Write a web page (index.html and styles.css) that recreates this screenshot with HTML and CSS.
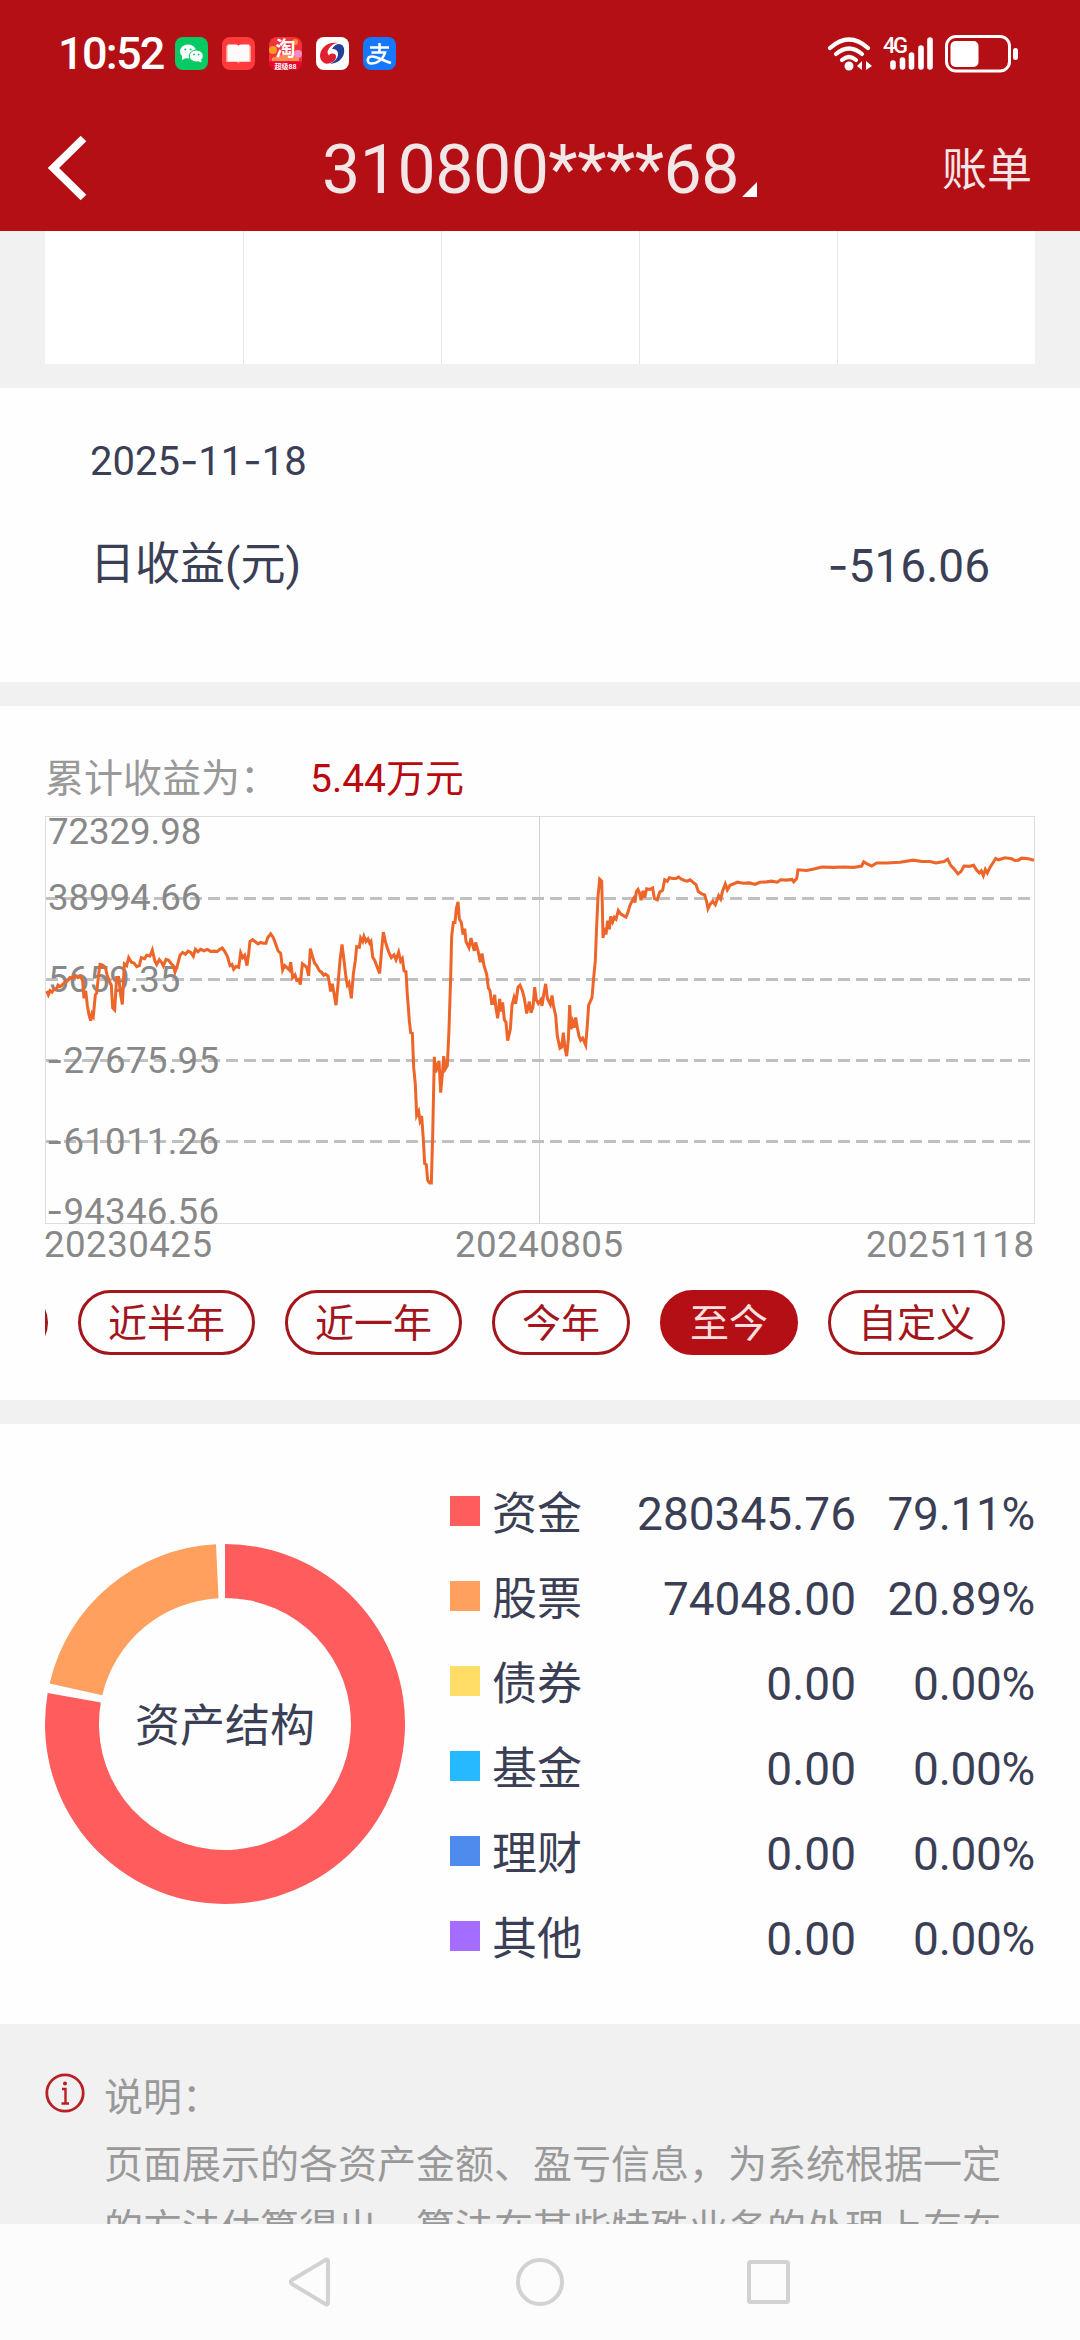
FILE: index.html
```html
<!DOCTYPE html>
<html lang="zh-CN">

<head>
  <meta charset="utf-8">
  <title>账户分析</title>
  <link rel="stylesheet" href="styles.css">
</head>

<body>
  <div class="container">
    <header class="header">
      <div class="status-bar">
        <span class="clock">10:52</span>
        <div class="app-icons">
          <svg class="app-icon" viewBox="0 0 33 33">
            <rect width="33" height="33" rx="8" fill="#07cb62" />
            <ellipse cx="13" cy="14.5" rx="8" ry="7" fill="#fff" />
            <path d="M7 19l0 4 4-2z" fill="#fff" />
            <ellipse cx="21.3" cy="19" rx="7" ry="6" fill="#fff" stroke="#07cb62" stroke-width="1" />
            <path d="M26 22l.6 3.5-4-1.5z" fill="#fff" />
            <circle cx="10.3" cy="12.5" r="1" fill="#07cb62" />
            <circle cx="15.6" cy="12.5" r="1" fill="#07cb62" />
            <circle cx="19" cy="17.5" r=".9" fill="#07cb62" />
            <circle cx="23.6" cy="17.5" r=".9" fill="#07cb62" />
          </svg>
          <svg class="app-icon" viewBox="0 0 33 33">
            <rect width="33" height="33" rx="8" fill="#ff3b3c" />
            <path d="M4 9h25v16H18l-1.500 1.500L15 25H4z" fill="#ff9a96" />
            <path d="M5.500 7.500h8.500q2.500 0 2.500 1.500 0-1.500 2.500-1.500h8.500v17H5.500z" fill="#fffafa" />
          </svg>
          <svg class="app-icon" viewBox="0 0 33 33">
            <rect width="33" height="33" rx="8" fill="#f5323a" />
            <circle cx="4" cy="13" r="4" fill="#ff9c1c" />
            <circle cx="29" cy="17" r="4" fill="#f08cc8" />
            <circle cx="26" cy="5" r="3" fill="#ff8a3a" />
            <path d="M3 21q13-7 27 0v3H3z" fill="#ff8b55" />
            <path d="M0 24.500h33v.500a8 8 0 0 1-8 8H8a8 8 0 0 1-8-8z" fill="#e8062c" />
            <text class="tao-text" x="16.5" y="19">淘</text>
            <text class="tao-small" x="16.5" y="31.500">超级88</text>
          </svg>
          <svg class="app-icon" viewBox="0 0 33 33">
            <rect width="33" height="33" rx="8" fill="#fff" />
            <path d="M22 6C12 4 4 11 4 19q0 5 5 7.500c7 1 12-4 11-8q-1-2.500-4-2-2.500 0-3 2-3-3 0-7 3-5 9-5.500z" fill="#e02030" />
            <path d="M16 12q3-5 7-5c4 0 6 4 5 9-1 6-6 10-14 11 6-3 8-7 8-10 0-4-3-5-6-5z" fill="#24419a" />
          </svg>
          <svg class="app-icon" viewBox="0 0 33 33">
            <rect width="33" height="33" rx="8" fill="#1677ff" />
            <path d="M7 10.500h19M16.500 6v9M8.500 15.500H22C20 23 13 27 8 26.500c-5-.5-4-7 1-7C15 19.500 20 24 28 26" fill="none" stroke="#fff" stroke-width="2.600" />
          </svg>
        </div>
        <svg class="system-icons" viewBox="0 0 196 40">
          <!-- wifi -->
          <g fill="none" stroke="#fff" stroke-width="4.200" stroke-linecap="round">
            <path d="M5 14q19-17 38 0" />
            <path d="M11 20q13-11 26 0" />
            <path d="M17 26q7-6 14 0" />
          </g>
          <circle cx="24" cy="32" r="4.500" fill="#fff" />
          <path d="M37 27v9l-5-4zM41 27v9l6-4z" fill="#fff" />
          <!-- signal -->
          <text class="network" x="58" y="19" textLength="25">4G</text>
          <g stroke="#fff" stroke-width="5.600" stroke-linecap="round">
            <path d="M68 29v4M77.500 26v7M86.500 21v12M96 14v19M105 6v27" />
          </g>
          <!-- battery -->
          <rect x="121.500" y="2.500" width="63" height="34.500" rx="9.500" fill="none" stroke="#fff" stroke-width="3" />
          <rect x="125.500" y="7" width="28" height="26" rx="5" fill="#fff" />
          <rect x="188" y="14" width="5" height="12" rx="2.500" fill="#fff" />
        </svg>
      </div>
      <div class="title-bar">
        <svg class="back" viewBox="0 0 40 66">
          <path d="M35.500 3.500L5.500 33l30 29.500" fill="none" stroke="#fff" stroke-width="8" />
        </svg>
        <div class="account">
          <span class="account-number">310800****68</span>
          <span class="account-arrow"></span>
        </div>
        <a class="bill">账单</a>
      </div>
    </header>

    <main class="content">
      <div class="calendar">
        <div class="day"></div>
        <div class="day"></div>
        <div class="day"></div>
        <div class="day"></div>
        <div class="day"></div>
      </div>

      <section class="card daily">
        <div class="daily-date">2025<span class="dash">-</span>11<span class="dash">-</span>18</div>
        <div class="daily-row">
          <span>日收益(元)</span>
          <span class="daily-value"><span class="dash">-</span>516.06</span>
        </div>
      </section>

      <section class="card profit">
        <div class="profit-title">
          <span class="profit-label">累计收益为：</span>
          <span class="profit-value">5.44万元</span>
        </div>
        <svg class="profit-chart" viewBox="-90 213 3240 1380">
          <g fill="none" stroke="#dcdcdc" stroke-width="3">
            <rect x="46.500" y="229.500" width="2967" height="1221" />
            <path d="M1528.500 229v1221" stroke="#d0d0d0" />
          </g>
          <g stroke="#c0c0c0" stroke-width="9" stroke-dasharray="36 18">
            <path d="M48 475.500h2964" />
            <path d="M48 718.500h2964" />
            <path d="M48 961.500h2964" />
            <path d="M48 1204.500h2964" />
          </g>
          <g class="axis">
            <text x="54" y="311" textLength="460">72329.98</text>
            <text x="54" y="509" textLength="460">38994.66</text>
            <text x="54" y="756" textLength="397">5659.35</text>
            <text x="49" y="998" textLength="518"><tspan class="dash">-</tspan>27675.95</text>
            <text x="49" y="1241" textLength="518"><tspan class="dash">-</tspan>61011.26</text>
            <text x="49" y="1451" textLength="518"><tspan class="dash">-</tspan>94346.56</text>
            <text x="42" y="1550" textLength="504">20230425</text>
            <text x="1275" y="1550" textLength="504">20240805</text>
            <text x="2508" y="1550" textLength="504">20251118</text>
          </g>
          <polyline class="profit-line" transform="scale(1 1.0331)" points="48,735 52,733 55,740 60,728 66,732 72,724 80,722 84,712 90,716 96,712 104,704 112,700 120,690 128,692 136,684 144,690 152,686 158,700 162,750 167,728 172,770 177,798 182,815 186,795 190,802 196,740 200,735 206,680 210,652 218,654 226,660 232,685 240,705 244,712 248,778 254,784 260,690 266,690 272,740 277,768 283,650 290,655 296,632 304,645 312,648 320,658 328,655 334,632 344,635 350,625 360,627 367,610 374,640 380,652 388,638 394,645 400,656 408,637 416,640 424,650 430,655 435,674 442,655 450,625 458,617 466,622 474,613 482,617 490,628 496,608 504,615 512,608 522,612 532,608 542,614 552,613 562,614 570,608 577,604 584,614 592,628 600,655 606,652 611,666 618,658 626,660 632,618 638,632 644,625 651,655 656,620 660,585 668,580 676,586 684,592 692,588 700,590 708,590 713,574 722,563 730,574 738,595 744,612 752,620 758,668 764,655 772,662 778,668 782,645 788,690 795,682 800,698 806,695 811,710 817,650 824,655 830,660 836,685 841,606 848,630 854,648 860,655 868,670 875,675 881,683 886,680 894,685 898,705 902,730 907,708 912,735 918,770 924,710 930,640 936,594 942,640 948,690 952,712 957,705 964,750 970,680 976,640 980,600 988,602 992,575 998,585 1002,570 1008,585 1014,578 1019,590 1023,585 1028,630 1034,640 1040,655 1049,678 1054,620 1060,558 1066,585 1072,604
            1076,615 1084,632 1092,624 1098,638 1106,616 1112,642 1117,635 1122,670 1128,673 1132,740 1138,815 1142,850 1147,852 1151,950 1156,1000 1160,1090 1166,1078 1170,1105 1175,1092 1180,1160 1184,1230 1189,1233 1193,1278 1199,1286 1204,1286 1208,1150 1213,920 1217,965 1222,945 1227,932 1232,1024 1238,960 1241,918 1246,955 1252,945 1257,840 1262,690 1265,570 1270,530 1275,530 1279,490 1284,470 1288,520 1294,530 1299,565 1304,548 1308,585 1317,603 1323,575 1329,600 1333,612 1337,588 1344,612 1351,645 1356,620 1362,655 1370,680 1375,720 1380,728 1385,765 1390,765 1394,740 1398,780 1403,808 1409,752 1413,788 1418,762 1423,812 1428,820 1433,873 1441,840 1446,770 1452,748 1457,766 1464,718 1470,712 1477,728 1483,750 1490,794 1498,760 1503,792 1509,775 1514,718 1519,755 1525,765 1532,755 1536,772 1541,740 1547,708 1552,750 1561,768 1566,742 1571,775 1577,800 1582,860 1590,895 1595,892 1600,850 1605,895 1610,918 1615,870 1619,770 1623,840 1628,818 1633,835 1637,806 1642,835 1647,860 1652,872 1658,866 1667,886 1671,840 1676,770 1686,748 1691,690 1696,640 1700,540 1704,455 1709,404 1715,410 1717,480 1719,575 1724,545 1728,565 1733,525 1738,550 1742,512 1748,528 1753,515 1758,520 1765,495 1772,505 1780,510 1788,514 1794,500 1800,480 1806,468 1811,460 1815,472 1819,440 1824,434 1829,445 1833,465 1839,438 1844,458 1850,432 1860,434 1868,430 1873,460 1882,464 1889,442 1898,436 1904,406 1912,410 1918,400 1928,402 1938,402 1946,398 1954,404 1964,408 1972,410 1980,406 1990,414 1998,420 2005,440 2014,446 2024,450 2030,470 2034,490
            2040,478 2048,468 2056,478 2066,452 2072,462 2078,438 2086,418 2092,435 2100,422 2110,418 2122,413 2140,416 2158,415 2175,419 2190,413 2210,412 2225,410 2242,413 2252,406 2270,407 2286,405 2291,412 2300,402 2304,377 2330,379 2355,374 2375,369 2410,370 2440,369 2470,370 2495,366 2501,354 2510,359 2525,366 2540,357 2570,357 2610,355 2650,349 2675,353 2700,353 2718,357 2742,353 2753,346 2762,364 2772,374 2784,389 2793,382 2802,366 2818,367 2831,364 2840,378 2848,386 2854,380 2860,394 2866,376 2872,386 2880,370 2890,355 2897,344 2906,348 2925,342 2945,345 2955,350 2965,349 2975,343 2995,345 3012,349" />
        </svg>
        <div class="ranges">
          <a class="range range-first"></a>
          <a class="range">近半年</a>
          <a class="range">近一年</a>
          <a class="range">今年</a>
          <a class="range active">至今</a>
          <a class="range">自定义</a>
        </div>
      </section>

      <section class="card assets">
        <svg class="donut" viewBox="-180 -180 360 360">
          <path d="M0-180A180 180 0 1 1-177.300-31L-124.200-21.500A126 126 0 1 0 0-126z" fill="#ff5c5e" />
          <path d="M-175.400-40.500A180 180 0 0 1-9-179.800L-6.500-125.800A126 126 0 0 0-122.700-28.800z" fill="#ffa05f" />
          <text class="donut-title" x="0" y="18">资产结构</text>
        </svg>
        <div class="legend">
          <div class="legend-row">
            <i class="swatch cash"></i>
            <span class="name">资金</span>
            <span class="amount">280345.76</span>
            <span class="percent">79.11%</span>
          </div>
          <div class="legend-row">
            <i class="swatch stock"></i>
            <span class="name">股票</span>
            <span class="amount">74048.00</span>
            <span class="percent">20.89%</span>
          </div>
          <div class="legend-row">
            <i class="swatch bond"></i>
            <span class="name">债券</span>
            <span class="amount">0.00</span>
            <span class="percent">0.00%</span>
          </div>
          <div class="legend-row">
            <i class="swatch fund"></i>
            <span class="name">基金</span>
            <span class="amount">0.00</span>
            <span class="percent">0.00%</span>
          </div>
          <div class="legend-row">
            <i class="swatch wealth"></i>
            <span class="name">理财</span>
            <span class="amount">0.00</span>
            <span class="percent">0.00%</span>
          </div>
          <div class="legend-row">
            <i class="swatch other"></i>
            <span class="name">其他</span>
            <span class="amount">0.00</span>
            <span class="percent">0.00%</span>
          </div>
        </div>
      </section>

      <section class="notice">
        <svg class="notice-icon" viewBox="0 0 40 40">
          <circle cx="20" cy="20" r="18.200" fill="none" stroke="#b92025" stroke-width="2.800" />
          <circle cx="20" cy="10.500" r="2" fill="#b92025" />
          <path d="M17 16h3.500v14M16.500 30.500h7.500" fill="none" stroke="#b92025" stroke-width="2.400" />
        </svg>
        <div class="notice-body">
          <div class="notice-title">说明：</div>
          <div class="notice-text">页面展示的各资产金额、盈亏信息，为系统根据一定<br>的方法估算得出，算法在某些特殊业务的处理上存在</div>
        </div>
      </section>
    </main>

    <nav class="nav-bar">
      <svg viewBox="0 0 52 52">
        <path d="M43 5v42a1.500 1.500 0 0 1-2.500 1L7 28q-2.500-2 0-4L40.500 4A1.500 1.500 0 0 1 43 5z" />
      </svg>
      <svg viewBox="0 0 52 52">
        <circle cx="26" cy="26" r="22" />
      </svg>
      <svg viewBox="0 0 52 52">
        <rect x="6" y="6" width="39" height="40" rx="1.500" />
      </svg>
    </nav>
  </div>
</body>

</html>
```
FILE: styles.css
```css
body {
  margin: 0;
  font-family: Roboto, "Noto Sans CJK SC", sans-serif;
  color: #3b3f55;
  background-color: #f1f1f1;
}

/* Container */
.container {
  display: flex;
  flex-direction: column;
  width: 1080px;
  height: 2340px;
  overflow: hidden;
}

/* Wider minus sign */
.dash {
  font-family: Inter, sans-serif;
}

/* Header */
.header {
  flex: none;
  height: 231px;
  background-color: #b40f14;
  color: #f3e6e7;
}

.status-bar {
  display: flex;
  align-items: center;
  height: 107px;
  padding: 0 59px 0 58px;
}

.clock {
  width: 117px;
  font-size: 45px;
  font-weight: 500;
  letter-spacing: -1.7px;
  color: #fff;
}

.app-icons {
  display: flex;
  flex: 1;
  gap: 14px;
}

.app-icon {
  width: 33px;
  height: 33px;
}

.tao-text {
  font-size: 20px;
  font-weight: bold;
  text-anchor: middle;
  fill: #fff;
}

.tao-small {
  font-size: 7px;
  font-weight: bold;
  text-anchor: middle;
  fill: #fff;
}

.system-icons {
  width: 196px;
  height: 40px;
}

.network {
  font-size: 22px;
  font-weight: 500;
  fill: #fff;
}

/* Title bar */
.title-bar {
  display: flex;
  align-items: center;
  justify-content: space-between;
  height: 122px;
  padding: 0 48px;
}

.back {
  width: 40px;
  height: 66px;
  margin-right: 49px;
}

.account {
  display: flex;
  align-items: flex-end;
}

.account-number {
  padding-top: 4px;
  font-size: 68px;
  line-height: 80px;
  letter-spacing: -0.5px;
}

.account-arrow {
  margin: 0 0 13px 3px;
  border-left: 15px solid transparent;
  border-bottom: 15px solid #fff;
}

.bill {
  margin-top: 6px;
  font-size: 45px;
  line-height: 60px;
}

/* Content */
.content {
  flex: 1;
  overflow: hidden;
}

.calendar {
  display: flex;
  height: 133px;
  margin: 0 45px 24px;
  background-color: #fff;
}

.day {
  flex: 1;
  border-left: 1px solid #e6e6e6;
}

.day:first-child {
  border-color: #fff;
}

.card {
  box-sizing: border-box;
  margin-bottom: 24px;
  background-color: #fefefe;
}

/* Daily profit */
.daily {
  height: 294px;
  padding: 43px 90px 0;
  line-height: 60px;
}

.daily-date {
  margin-bottom: 43px;
  font-size: 40px;
}

.daily-row {
  display: flex;
  justify-content: space-between;
  font-size: 45px;
}

.daily-value {
  font-size: 46px;
}

/* Total profit */
.profit {
  height: 694px;
  padding-top: 43px;
}

.profit-title {
  display: flex;
  margin-left: 45px;
  font-size: 39px;
  line-height: 60px;
}

.profit-label {
  width: 265px;
  color: #999;
}

.profit-value {
  color: #b9090d;
}

.profit-chart {
  display: block;
  width: 1080px;
  height: 460px;
  margin-top: 2px;
}

.axis {
  font-size: 110px;
  fill: #888;
}

.profit-line {
  fill: none;
  stroke: #ee6529;
  stroke-width: 9;
}

/* Range buttons */
.ranges {
  display: flex;
  gap: 30px;
  margin: 19px 45px 0;
  overflow: hidden;
}

.range {
  box-sizing: border-box;
  flex: none;
  height: 65px;
  padding: 0 27px;
  border: 3px solid #a3151b;
  border-radius: 33px;
  font-size: 39px;
  line-height: 63px;
  color: #a3151b;
}

.range-first {
  width: 177px;
  margin-left: -174px;
}

.range.active {
  border-color: #b40f14;
  background-color: #b40f14;
  color: #fbe0e1;
}

/* Assets */
.assets {
  display: flex;
  align-items: center;
  height: 600px;
  margin-bottom: 0;
  padding: 0 45px;
}

.donut {
  width: 360px;
  height: 360px;
}

.donut-title {
  font-size: 45px;
  text-anchor: middle;
  fill: #3b3f55;
}

.legend {
  flex: 1;
  margin-left: 45px;
  padding-top: 5px;
}

.legend-row {
  display: flex;
  align-items: center;
  height: 85px;
  font-size: 46px;
  line-height: 85px;
}

.swatch {
  width: 30px;
  height: 30px;
  margin: 0 12px 7px 0;
}

.cash { background-color: #ff5c5e; }
.stock { background-color: #ffa05f; }
.bond { background-color: #ffdd66; }
.fund { background-color: #27b9ff; }
.wealth { background-color: #4f8bed; }
.other { background-color: #a46cff; }

.name {
  font-size: 45px;
}

.amount {
  flex: 1;
  text-align: right;
}

.percent {
  width: 179px;
  text-align: right;
  letter-spacing: -0.3px;
}

/* Notice */
.notice {
  display: flex;
  padding: 42px 45px 0;
  font-size: 39px;
  line-height: 64px;
  color: #999;
}

.notice-icon {
  width: 40px;
  height: 40px;
  margin: 7px 19px 0 0;
}

.notice-title {
  margin-bottom: 3px;
}

.notice-text {
  white-space: nowrap;
}

/* Navigation bar */
.nav-bar {
  display: flex;
  flex: none;
  align-items: center;
  justify-content: center;
  gap: 177px;
  height: 116px;
  background-color: #fcfcfc;
}

.nav-bar svg {
  width: 52px;
  height: 52px;
  fill: none;
  stroke: #d2d2d2;
  stroke-width: 4;
}
```
